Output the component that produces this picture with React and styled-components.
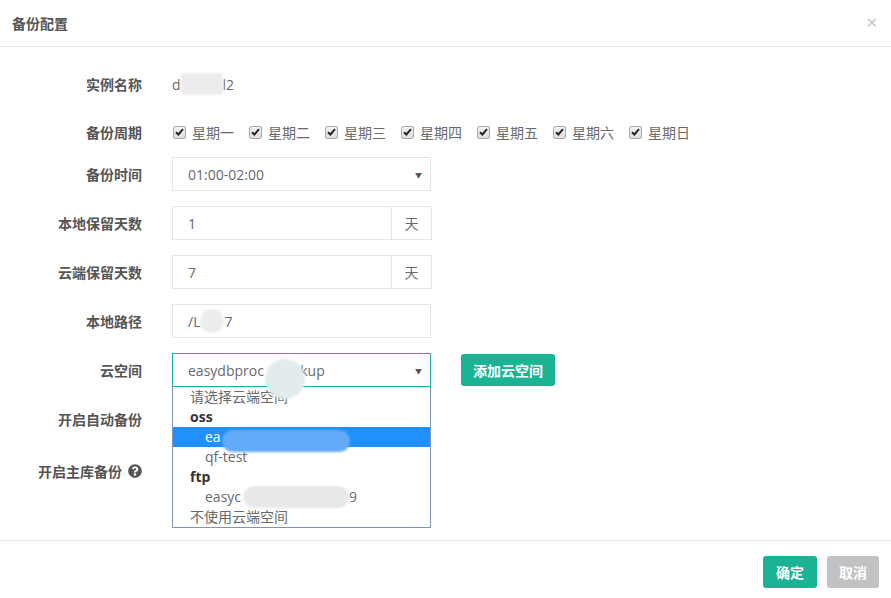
import React from "react";
import styled, { createGlobalStyle } from "styled-components";
import { FaQuestionCircle } from "react-icons/fa";

const GlobalStyle = createGlobalStyle`
  html, body {
    margin: 0;
    padding: 0;
    background: #fff;
  }
  body {
    font-family: "Open Sans", "Noto Sans CJK SC", sans-serif;
    color: #676a6c;
  }
`;

const days = ["星期一", "星期二", "星期三", "星期四", "星期五", "星期六", "星期日"];

const Modal = styled.div`
  width: 891px;
  height: 598px;
  overflow: hidden;
  background: #fff;
`;

const Header = styled.div`
  height: 46px;
  border-bottom: 1px solid #e5e5e5;
  display: flex;
  align-items: center;
  justify-content: space-between;
  padding: 0 13px 0 12px;
  box-sizing: content-box;
`;

const Title = styled.h4`
  margin: 0;
  font-size: 14px;
  font-weight: bold;
  color: #555;
`;

const Close = styled.span`
  font-family: "DejaVu Sans", sans-serif;
  font-size: 15px;
  color: #c8c8c8;
  margin-top: -1px;
`;

const Body = styled.div`
  padding: 20px 0 0;
  height: 493px;
  box-sizing: border-box;
  position: relative;
`;

const Row = styled.div`
  display: flex;
  align-items: ${(p) => (p.top ? "flex-start" : "center")};
  height: ${(p) => p.h || 34}px;
  margin-bottom: ${(p) => (p.mb === undefined ? 15 : p.mb)}px;
  padding-top: ${(p) => p.pt || 0}px;
`;

const Label = styled.label`
  width: 142px;
  text-align: right;
  font-size: 14px;
  font-weight: bold;
  color: #555;
  flex-shrink: 0;
  display: flex;
  justify-content: flex-end;
  align-items: center;
  gap: 6px;
`;

const Help = styled(FaQuestionCircle)`
  color: #555;
  width: 14px;
  height: 14px;
`;

const Field = styled.div`
  margin-left: 30px;
  display: flex;
  align-items: center;
  position: relative;
`;

const Static = styled.span`
  font-size: 14px;
  display: inline-flex;
  align-items: center;
`;

const Blob = styled.span`
  display: inline-block;
  width: ${(p) => p.w}px;
  height: ${(p) => p.h}px;
  background: ${(p) => p.c || "#e9e9e9"};
  border-radius: ${(p) => p.r || 6}px;
  filter: blur(1px);
`;

const FloatBlob = styled(Blob)`
  position: absolute;
  left: ${(p) => p.x}px;
  top: ${(p) => p.y}px;
  z-index: 3;
`;

const Days = styled.div`
  display: flex;
  align-items: center;
`;

const Day = styled.label`
  width: 76px;
  display: flex;
  align-items: center;
  font-size: 14px;
  color: #676a6c;
`;

const Box = styled.span`
  width: 11px;
  height: 11px;
  border: 1px solid #a8a8a8;
  border-radius: 2px;
  background: linear-gradient(#f4f4f4, #dedede);
  margin: 0 6px 0 1px;
  display: inline-flex;
  align-items: center;
  justify-content: center;
`;

const Select = styled.div`
  width: 259px;
  height: 34px;
  box-sizing: border-box;
  border: 1px solid ${(p) => (p.active ? "#1ab394" : "#e5e6e7")};
  display: flex;
  align-items: center;
  justify-content: space-between;
  padding: 0 8px 0 15px;
  font-size: 14px;
  color: #676a6c;
  position: relative;
`;

const Caret = styled.span`
  font-size: 7px;
  color: #555;
  margin-top: 2px;
`;

const Input = styled.div`
  width: ${(p) => p.w || 259}px;
  height: 34px;
  box-sizing: border-box;
  border: 1px solid #e5e6e7;
  display: flex;
  align-items: center;
  padding: 0 15px;
  font-size: 14px;
  color: #676a6c;
`;

const Addon = styled.span`
  width: 40px;
  height: 34px;
  box-sizing: border-box;
  border: 1px solid #e5e6e7;
  border-left: none;
  display: flex;
  align-items: center;
  justify-content: center;
  font-size: 14px;
  color: #676a6c;
`;

const Button = styled.button`
  background: ${(p) => p.bg || "#1ab394"};
  color: #fff;
  border: none;
  border-radius: 3px;
  height: 32px;
  padding: 0 ${(p) => p.px || 12}px;
  font-family: "Open Sans", "Noto Sans CJK SC", sans-serif;
  font-size: 14px;
  font-weight: bold;
  cursor: pointer;
`;

const AddButton = styled(Button)`
  margin-left: 30px;
`;

const Menu = styled.ul`
  position: absolute;
  top: 34px;
  left: 0;
  width: 259px;
  box-sizing: border-box;
  margin: 0;
  padding: 0;
  list-style: none;
  border: 1px solid #8291b5;
  border-top: none;
  background: #fff;
  z-index: 2;
`;

const Item = styled.li`
  height: 20px;
  line-height: 20px;
  font-size: 14px;
  padding-left: ${(p) => (p.indent ? 32 : 17)}px;
  font-weight: ${(p) => (p.group ? "bold" : "normal")};
  color: ${(p) => (p.sel ? "#fff" : p.group ? "#333" : "#676a6c")};
  background: ${(p) => (p.sel ? "#1e90ff" : "transparent")};
  display: flex;
  align-items: center;
`;

const Tail = styled.span`
  margin-left: ${(p) => p.gap}px;
`;

const Footer = styled.div`
  border-top: 1px solid #e5e5e5;
  display: flex;
  justify-content: flex-end;
  gap: 10px;
  padding: 15px 12px;
`;

const Check = () => (
  <svg width="9" height="8" viewBox="0 0 9 8">
    <path d="M1 4.2 L3.4 6.5 L8 1.2" fill="none" stroke="#222" strokeWidth="2" />
  </svg>
);

export default function App() {
  return (
    <Modal>
      <GlobalStyle />
      <Header>
        <Title>备份配置</Title>
        <Close>✕</Close>
      </Header>
      <Body>
        <Row>
          <Label>实例名称</Label>
          <Field>
            <Static>
              d<Blob w={42} h={22} c="#ececec" r={3} />l2
            </Static>
          </Field>
        </Row>
        <Row h={32} mb={9}>
          <Label>备份周期</Label>
          <Field>
            <Days>
              {days.map((d) => (
                <Day key={d}>
                  <Box>
                    <Check />
                  </Box>
                  {d}
                </Day>
              ))}
            </Days>
          </Field>
        </Row>
        <Row>
          <Label>备份时间</Label>
          <Field>
            <Select>
              01:00-02:00
              <Caret>▼</Caret>
            </Select>
          </Field>
        </Row>
        <Row>
          <Label>本地保留天数</Label>
          <Field>
            <Input w={220}>1</Input>
            <Addon>天</Addon>
          </Field>
        </Row>
        <Row>
          <Label>云端保留天数</Label>
          <Field>
            <Input w={220}>7</Input>
            <Addon>天</Addon>
          </Field>
        </Row>
        <Row>
          <Label>本地路径</Label>
          <Field>
            <Input>
              /L<Blob w={24} h={24} c="#ececec" r={12} />7
            </Input>
          </Field>
        </Row>
        <Row>
          <Label>云空间</Label>
          <Field>
            <Select active>
              <span>easydbproc&nbsp;&nbsp;&nbsp;&nbsp;&nbsp;&nbsp;&nbsp;&nbsp;&nbsp;&nbsp;kup</span>
              <Caret>▼</Caret>
            </Select>
            <FloatBlob x={93} y={6} w={40} h={40} c="#e2ecec" r={20} />
            <Menu>
              <Item>请选择云端空间</Item>
              <Item group>oss</Item>
              <Item sel indent>
                ea
              </Item>
              <Item indent>qf-test</Item>
              <Item group>ftp</Item>
              <Item indent>
                easyc
                <Tail gap={108}>9</Tail>
              </Item>
              <Item>不使用云端空间</Item>
            </Menu>
            <FloatBlob x={50} y={77} w={128} h={22} c="#63aaf8" r={11} />
            <FloatBlob x={71} y={133} w={106} h={22} c="#e8e8e8" r={11} />
            <AddButton px={12}>添加云空间</AddButton>
          </Field>
        </Row>
        <Row mb={0}>
          <Label>开启自动备份</Label>
        </Row>
        <Row h={74} mb={0} top pt={25}>
          <Label>
            开启主库备份 <Help />
          </Label>
        </Row>
      </Body>
      <Footer>
        <Button px={13}>确定</Button>
        <Button px={12} bg="#c2c2c2">取消</Button>
      </Footer>
    </Modal>
  );
}
